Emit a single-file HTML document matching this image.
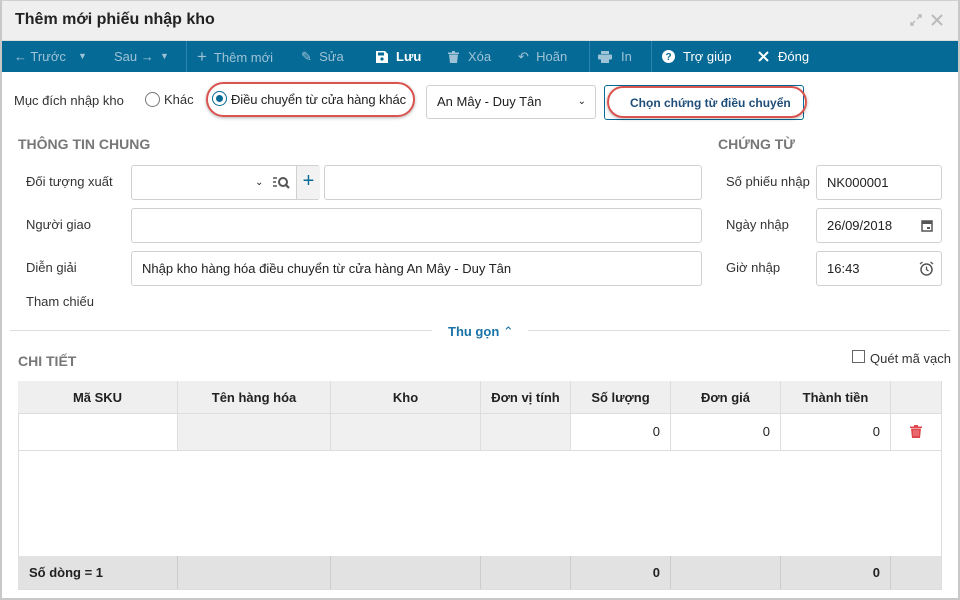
<!DOCTYPE html>
<html><head><meta charset="utf-8"><style>
*{box-sizing:border-box;margin:0;padding:0}
body{width:960px;height:600px;background:#fff;font-family:"Liberation Sans",Arial,sans-serif;font-size:13px;color:#212121;position:relative;overflow:hidden}
.a{position:absolute}
.frame{left:0;top:0;width:960px;height:600px;border:2px solid #c8c8c8;border-top:1px solid #d0d0d0}
.title{left:2px;top:1px;width:956px;height:40px;background:#efefef;border-bottom:1px solid #ddd}
.tb{left:2px;top:41px;width:956px;height:31px;background:#066a96}
.tbi{top:41px;height:31px;line-height:31px;font-size:13px;color:#9fc3d6}
.tbw{color:#fff;font-weight:bold}
.sep{top:41px;width:1px;height:31px;background:#2a84ac}
.inp{border:1px solid #d0d0d0;border-radius:3px;background:#fff;height:35px;line-height:33px;padding-left:10px;font-size:13px}
.lbl{font-size:13px;color:#333}
.h{font-weight:bold;font-size:14px;color:#777}
.cell{position:absolute;border-right:1px solid #ddd;height:100%}
</style></head><body>
<div class="a title"></div>
<div class="a" style="left:15px;top:11px;font-size:16px;font-weight:bold;color:#222">Thêm mới phiếu nhập kho</div>
<svg class="a" style="left:909px;top:13px" width="14" height="14" viewBox="0 0 14 14"><path d="M2 12L6 8M8 6L12 2M9 2H12V5M2 9V12H5" stroke="#bbb" stroke-width="1.5" fill="none"/></svg>
<svg class="a" style="left:930px;top:13px" width="14" height="14" viewBox="0 0 14 14"><path d="M2 2L12 12M12 2L2 12" stroke="#bbb" stroke-width="2"/></svg>
<div class="a tb"></div>
<div class="a tbi" style="left:14px">← Trước</div>
<div class="a tbi" style="left:78px;font-size:9px">▼</div>
<div class="a tbi" style="left:114px">Sau →</div>
<div class="a tbi" style="left:160px;font-size:9px">▼</div>
<div class="a sep" style="left:186px"></div>
<div class="a tbi" style="left:197px"><span style="font-size:17px">+</span>&nbsp; Thêm mới</div>
<div class="a tbi" style="left:301px">✎&nbsp; Sửa</div>
<svg class="a" style="left:376px;top:51px" width="12" height="12" viewBox="0 0 12 12"><path d="M0 0H9L12 3V12H0Z" fill="#fff"/><rect x="2" y="1.5" width="6" height="3" fill="#066a96"/><circle cx="6" cy="8" r="1.6" fill="#066a96"/></svg>
<div class="a tbi tbw" style="left:396px">Lưu</div>
<svg class="a" style="left:448px;top:51px" width="11" height="12" viewBox="0 0 11 12"><path d="M0 1.5H11V3H0ZM4 0H7V1.5H4ZM1 3.5H10L9 12H2Z" fill="#9fc3d6"/></svg>
<div class="a tbi" style="left:468px">Xóa</div>
<div class="a tbi" style="left:518px">↶&nbsp; Hoãn</div>
<div class="a sep" style="left:589px"></div>
<svg class="a" style="left:598px;top:51px" width="14" height="12" viewBox="0 0 14 12"><rect x="3" y="0" width="8" height="3" fill="#9fc3d6"/><rect x="0" y="3.5" width="14" height="5" rx="1" fill="#9fc3d6"/><rect x="3" y="8" width="8" height="4" fill="#9fc3d6"/></svg>
<div class="a tbi" style="left:621px">In</div>
<div class="a sep" style="left:651px"></div>
<svg class="a" style="left:662px;top:50px" width="13" height="13" viewBox="0 0 13 13"><circle cx="6.5" cy="6.5" r="6.5" fill="#fff"/><text x="6.5" y="10" font-size="10" font-weight="bold" text-anchor="middle" fill="#066a96" font-family="Liberation Sans">?</text></svg>
<div class="a tbi" style="left:683px;color:#fff">Trợ giúp</div>
<svg class="a" style="left:758px;top:51px" width="11" height="11" viewBox="0 0 11 11"><path d="M1 1L10 10M10 1L1 10" stroke="#fff" stroke-width="2"/></svg>
<div class="a tbi" style="left:778px;color:#fff">Đóng</div>

<div class="a lbl" style="left:14px;top:93px">Mục đích nhập kho</div>
<div class="a" style="left:145px;top:92px;width:15px;height:15px;border:1.5px solid #777;border-radius:50%"></div>
<div class="a lbl" style="left:164px;top:92px;font-size:13px">Khác</div>
<div class="a" style="left:206px;top:82px;width:209px;height:35px;border:2px solid #d9534f;border-radius:18px;box-shadow:0 1px 3px rgba(0,0,0,.3)"></div>
<div class="a" style="left:212px;top:91px;width:15px;height:15px;border:1.5px solid #066a96;border-radius:50%"></div>
<div class="a" style="left:216px;top:95px;width:7px;height:7px;background:#066a96;border-radius:50%"></div>
<div class="a lbl" style="left:231px;top:92px;font-size:13px;color:#222;letter-spacing:-0.1px">Điều chuyển từ cửa hàng khác</div>
<div class="a inp" style="left:426px;top:85px;width:170px;height:34px;font-size:13px;line-height:32px">An Mây - Duy Tân<span style="position:absolute;right:9px;font-size:10px">⌄</span></div>
<div class="a" style="left:604px;top:85px;width:200px;height:35px;border:1px solid #066a96;border-radius:3px"></div>
<div class="a" style="left:607px;top:86px;width:200px;height:32px;border:2px solid #d9534f;border-radius:17px;box-shadow:0 1px 3px rgba(0,0,0,.3)"></div>
<div class="a" style="left:630px;top:96px;font-size:12px;font-weight:bold;color:#1f4e79">Chọn chứng từ điều chuyển</div>

<div class="a h" style="left:18px;top:136px">THÔNG TIN CHUNG</div>
<div class="a h" style="left:718px;top:136px">CHỨNG TỪ</div>
<div class="a lbl" style="left:26px;top:174px">Đối tượng xuất</div>
<div class="a inp" style="left:131px;top:165px;width:189px;padding:0"><div style="position:absolute;left:164px;top:0;width:24px;height:33px;background:#f2f2f2;border-left:1px solid #d0d0d0;color:#066a96;font-size:20px;text-align:center;line-height:31px">+</div><span style="position:absolute;left:123px;font-size:10px">⌄</span>
<svg style="position:absolute;left:141px;top:10px" width="18" height="14" viewBox="0 0 18 14"><path d="M0 2H4M0 6H3M0 10H4" stroke="#555" stroke-width="1.5"/><circle cx="10" cy="6" r="4" stroke="#555" stroke-width="2" fill="none"/><path d="M13 9L16 12" stroke="#555" stroke-width="2.2"/></svg></div>
<div class="a inp" style="left:324px;top:165px;width:378px"></div>
<div class="a lbl" style="left:26px;top:217px">Người giao</div>
<div class="a inp" style="left:131px;top:208px;width:571px"></div>
<div class="a lbl" style="left:26px;top:260px">Diễn giải</div>
<div class="a inp" style="left:131px;top:251px;width:571px">Nhập kho hàng hóa điều chuyển từ cửa hàng An Mây - Duy Tân</div>
<div class="a lbl" style="left:26px;top:294px">Tham chiếu</div>

<div class="a lbl" style="left:726px;top:174px">Số phiếu nhập</div>
<div class="a inp" style="left:816px;top:165px;width:126px">NK000001</div>
<div class="a lbl" style="left:726px;top:217px">Ngày nhập</div>
<div class="a inp" style="left:816px;top:208px;width:126px">26/09/2018
<svg style="position:absolute;right:8px;top:10px" width="12" height="13" viewBox="0 0 12 13"><rect x="1" y="2" width="10" height="10" fill="none" stroke="#555" stroke-width="1.5"/><rect x="1" y="2" width="10" height="3" fill="#555"/><rect x="6" y="8" width="3" height="2" fill="#555"/></svg></div>
<div class="a lbl" style="left:726px;top:260px">Giờ nhập</div>
<div class="a inp" style="left:816px;top:251px;width:126px">16:43
<svg style="position:absolute;right:7px;top:9px" width="15" height="15" viewBox="0 0 15 15"><circle cx="7.5" cy="8.5" r="5.5" fill="none" stroke="#555" stroke-width="1.5"/><path d="M7.5 5.5V8.5L9.5 10M1 3L3.5 1M14 3L11.5 1" stroke="#555" stroke-width="1.3" fill="none"/></svg></div>

<div class="a" style="left:10px;top:330px;width:422px;height:1px;background:#ddd"></div>
<div class="a" style="left:528px;top:330px;width:422px;height:1px;background:#ddd"></div>
<div class="a" style="left:448px;top:324px;font-size:13px;font-weight:bold;color:#1a73a8">Thu gọn <span style="font-weight:normal">⌃</span></div>

<div class="a h" style="left:18px;top:353px">CHI TIẾT</div>
<div class="a" style="left:852px;top:350px;width:13px;height:13px;border:1.5px solid #666"></div>
<div class="a lbl" style="left:870px;top:351px">Quét mã vạch</div>

<div class="a" style="left:18px;top:381px;width:924px;height:209px;border:1px solid #ddd;border-top:1px solid #ddd"></div>
<div class="a" style="left:18px;top:381px;width:923px;height:33px;background:#efefef;border-bottom:1px solid #ddd;font-weight:bold;font-size:13px">
<div class="cell" style="left:0;width:160px;text-align:center;line-height:33px">Mã SKU</div>
<div class="cell" style="left:160px;width:153px;text-align:center;line-height:33px">Tên hàng hóa</div>
<div class="cell" style="left:313px;width:150px;text-align:center;line-height:33px">Kho</div>
<div class="cell" style="left:463px;width:90px;text-align:center;line-height:33px">Đơn vị tính</div>
<div class="cell" style="left:553px;width:100px;text-align:center;line-height:33px">Số lượng</div>
<div class="cell" style="left:653px;width:110px;text-align:center;line-height:33px">Đơn giá</div>
<div class="cell" style="left:763px;width:110px;text-align:center;line-height:33px">Thành tiền</div>
</div>
<div class="a" style="left:18px;top:414px;width:923px;height:37px;border-bottom:1px solid #ddd">
<div class="cell" style="left:0;width:160px"></div>
<div class="cell" style="left:160px;width:153px;background:#f0f0f0"></div>
<div class="cell" style="left:313px;width:150px;background:#f0f0f0"></div>
<div class="cell" style="left:463px;width:90px;background:#f0f0f0"></div>
<div class="cell" style="left:553px;width:100px;text-align:right;padding-right:10px;line-height:36px">0</div>
<div class="cell" style="left:653px;width:110px;text-align:right;padding-right:10px;line-height:36px">0</div>
<div class="cell" style="left:763px;width:110px;text-align:right;padding-right:10px;line-height:36px">0</div>
<svg style="position:absolute;left:892px;top:11px" width="12" height="13" viewBox="0 0 12 13"><path d="M0 1.5H12V3H0ZM4 0H8V1.5H4ZM1 3.5H11L10 13H2Z" fill="#e0474c"/><path d="M4 5V11M6 5V11M8 5V11" stroke="#f6a0a0" stroke-width="0.8"/></svg>
</div>
<div class="a" style="left:18px;top:556px;width:923px;height:33px;background:#e2e2e2;font-weight:bold;line-height:33px">
<div class="cell" style="left:0;width:160px;padding-left:11px;border-color:#ccc">Số dòng = 1</div>
<div class="cell" style="left:160px;width:153px;border-color:#ccc"></div>
<div class="cell" style="left:313px;width:150px;border-color:#ccc"></div>
<div class="cell" style="left:463px;width:90px;border-color:#ccc"></div>
<div class="cell" style="left:553px;width:100px;text-align:right;padding-right:10px;border-color:#ccc">0</div>
<div class="cell" style="left:653px;width:110px;border-color:#ccc"></div>
<div class="cell" style="left:763px;width:110px;text-align:right;padding-right:10px;border-color:#ccc">0</div>
</div>
<div class="a frame"></div>
</body></html>
